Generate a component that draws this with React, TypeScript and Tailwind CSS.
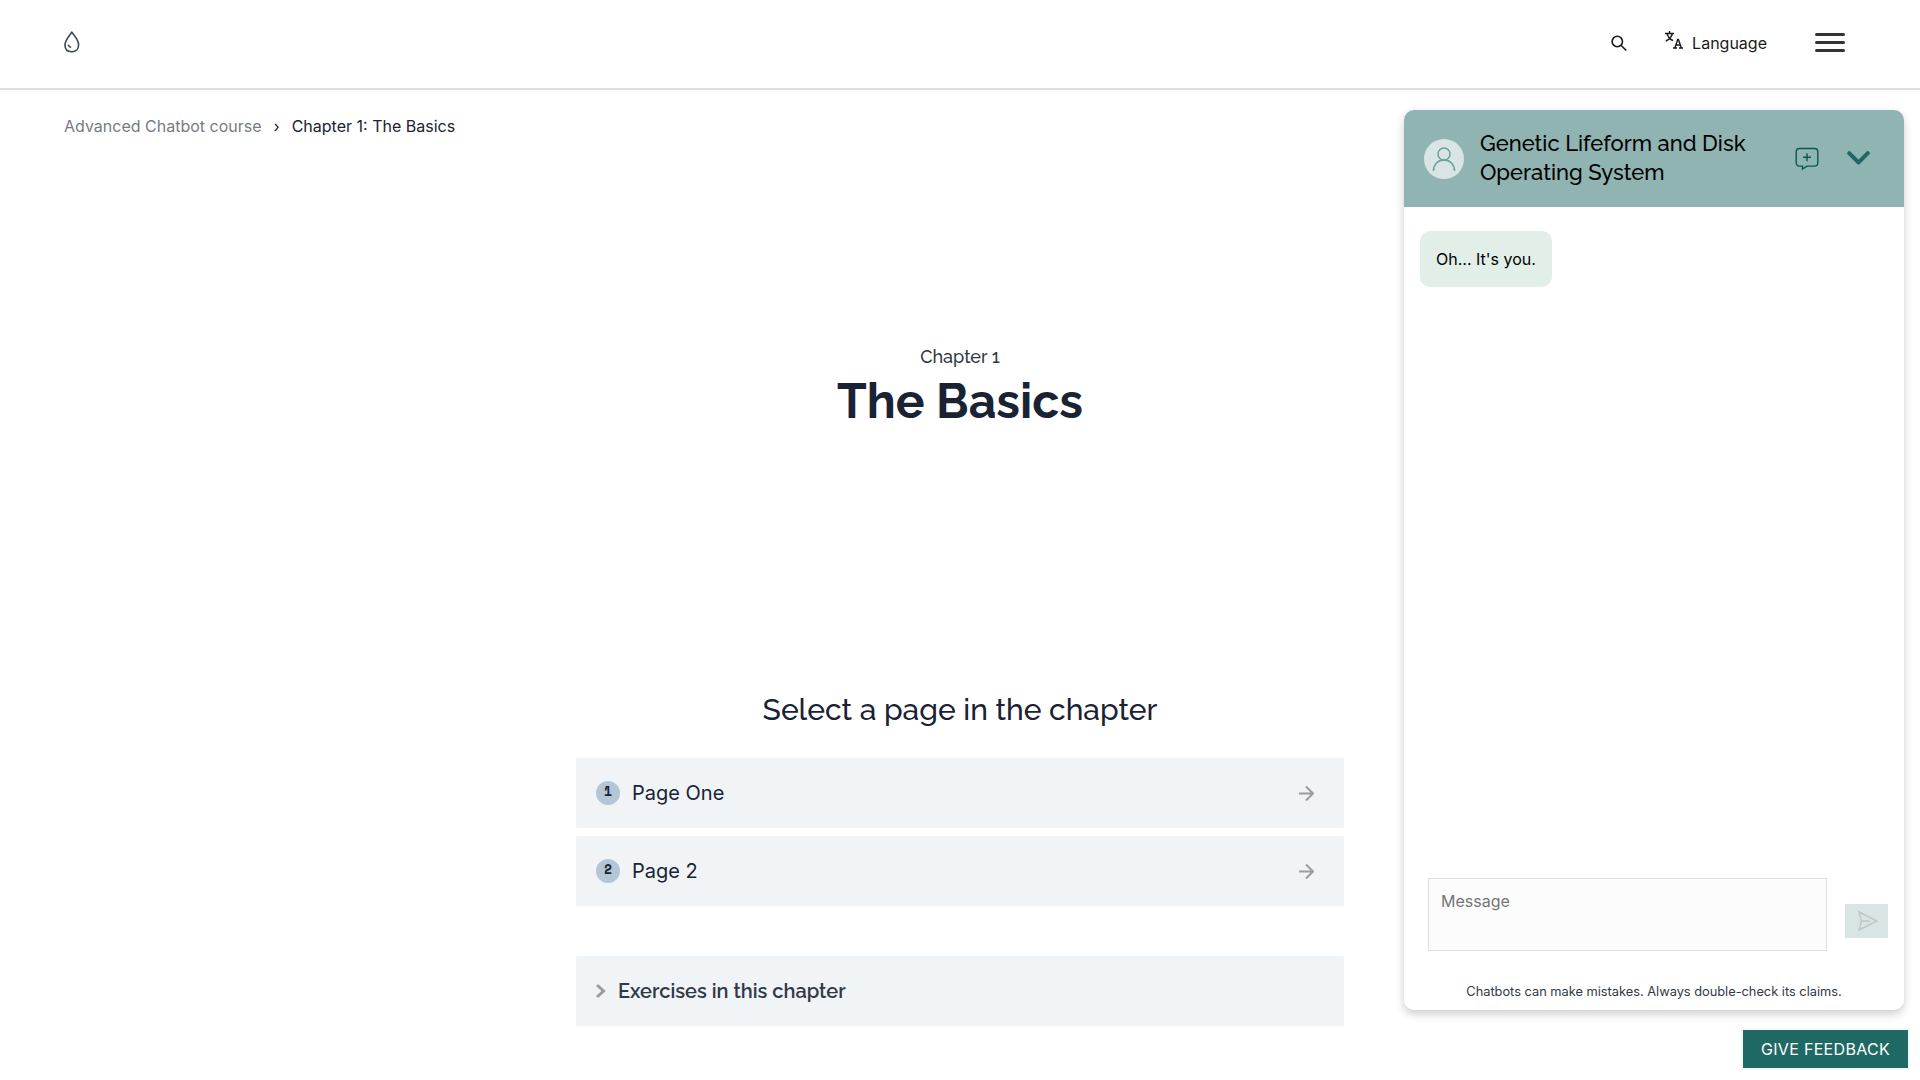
import React from "react";

function PageCard({ n, title }: { n: string; title: string }) {
  return (
    <a className="flex h-[70px] items-center rounded-[2px] bg-[#f0f4f7] pl-5 pr-[30px]">
      <span className="flex h-6 w-6 items-center justify-center rounded-full bg-[#b4c5d6] pb-1 font-['Space_Mono','Liberation_Mono',monospace] text-[13px] leading-none font-bold text-[#1a2333]">
        {n}
      </span>
      <span className="ml-3 flex-1 text-[20px] leading-6 text-[#1a2333]">{title}</span>
      <svg className="h-4 w-[15px] shrink-0" viewBox="0 0 15 16" fill="none" stroke="#989ca3" strokeWidth="2">
        <path d="M0 8.500h14M7 1.500l7 7-7 7" />
      </svg>
    </a>
  );
}

function Header() {
  return (
    <header className="flex h-[90px] items-center border-b-2 border-[#dedede] pl-16 pr-[75px]">
      <svg className="-mt-[5px] h-[22px] w-4" viewBox="0 0 16 22" fill="none" stroke="#3b4754" strokeWidth="1.600" strokeLinejoin="round">
        <path d="M7.800 1.200C6.300 3.800 1 8.300 1 14c0 4.200 2.700 6.700 6.800 6.700s6.800-2.700 6.800-6.700C14.600 8.300 9.400 3.800 7.800 1.200Z" />
        <path d="M4.200 13.800c.5 1.500 1.300 2.300 2.900 2.700" />
      </svg>
      <svg className="ml-auto -mt-0.5 h-4 w-4" viewBox="0 0 16 16" fill="none" stroke="#1a1a1a" strokeWidth="1.600">
        <circle cx="6.300" cy="6.500" r="5.200" />
        <path d="M10 10.200l5.300 5.300" />
      </svg>
      <svg className="ml-[38px] mb-2 h-[18px] w-[18px]" viewBox="0 0 18 18" fill="none" stroke="#1a1a1a" strokeWidth="1.400">
        <path d="M0 2.500h9M4.500 0v2.500M7.500 2.500C6.500 6 4 8.500.8 10M2 2.500C3 6 5 8.500 8 9.500" />
        <path d="M8 17h4M14 17h4M9.800 17l3-8.500h.6l3 8.500M11 14h4.300" />
      </svg>
      <span className="ml-[9px] -mt-0.5 text-[16px] leading-5 text-[#1a1a1a]">Language</span>
      <span className="ml-12 -mt-[3px] flex w-[30px] flex-col gap-[5px]">
        <i className="h-[3px] rounded-full bg-[#333]" />
        <i className="h-[3px] rounded-full bg-[#333]" />
        <i className="h-[3px] rounded-full bg-[#333]" />
      </span>
    </header>
  );
}

function Chat() {
  return (
    <aside className="absolute left-[1404px] top-[110px] flex h-[900px] w-[500px] flex-col overflow-hidden rounded-[10px] bg-white shadow-[0_4px_10px_rgba(0,0,0,0.2)]">
      <div className="flex h-[97px] shrink-0 items-center bg-[#90b4b2] pl-5 pr-[34px]">
        <div className="mt-px flex h-10 w-10 items-center justify-center rounded-full bg-[#d9e5e4]">
          <svg className="h-6 w-6" viewBox="0 0 24 24" fill="none" stroke="#69a19d" strokeWidth="1.500">
            <circle cx="12" cy="7" r="6" />
            <path d="M1.500 24C1.500 17.500 6 13 12 13s10.500 4.500 10.500 11" />
          </svg>
        </div>
        <h2 className="ml-4 -mt-px w-[280px] font-['Raleway','Lato',sans-serif] text-[22px] leading-[29px] font-medium text-black">
          Genetic Lifeform and Disk Operating System
        </h2>
        <svg className="ml-auto h-6 w-6" viewBox="0 0 24 24" fill="none" stroke="#065853" strokeWidth="1.400">
          <path d="M4.500 1.500h15c1.900 0 3.300 1.400 3.300 3.300v11c0 1.900-1.400 3.300-3.300 3.300h-7.500L7.500 22v-2.900h-3c-1.900 0-3.300-1.400-3.300-3.300v-11c0-1.900 1.400-3.300 3.300-3.300ZM12 6.300v8M8 10.300h8" />
        </svg>
        <svg className="ml-7 -mt-px h-4 w-[23px]" viewBox="0 0 23 16" fill="none" stroke="#1f6964" strokeWidth="4" strokeLinecap="round" strokeLinejoin="round">
          <path d="M2.200 3.200l9.300 9.300 9.300-9.300" />
        </svg>
      </div>
      <div className="flex-1 px-4 pt-6">
        <p className="w-fit rounded-[10px] bg-[#e2efe8] p-4 text-[16px] leading-6 text-black">Oh... It's you.</p>
      </div>
      <div className="flex items-center pl-6 pr-4">
        <div className="h-[73px] w-[399px] border border-[#dedede] bg-[#fcfcfc] px-3 py-[11px] text-[16px] leading-[22px] text-[#757575]">Message</div>
        <div className="ml-auto mt-[13px] flex h-[34px] w-[43px] items-center justify-center bg-[#d9e5e4]">
          <svg className="ml-[3px] h-5 w-5" viewBox="0 0 20 20" fill="none" stroke="#bcc8c6" strokeWidth="1.500">
            <path d="M1 1l18 9-18 9 2.500-9ZM3.500 10h8" />
          </svg>
        </div>
      </div>
      <p className="mt-[31px] mb-2 text-center text-[12.800px] leading-5 text-[#313947]">Chatbots can make mistakes. Always double-check its claims.</p>
    </aside>
  );
}

export default function App() {
  return (
    <div className="relative h-[1080px] w-[1920px] overflow-hidden bg-white font-['Inter',sans-serif]">
      <Header />
      <nav className="flex h-[73px] items-center pb-0.5 pl-16 text-[16px] leading-6">
        <span className="text-[#767b85]">Advanced Chatbot course</span>
        <span className="mx-3 text-[#1a2333]">›</span>
        <span className="text-[#1a2333]">Chapter 1: The Basics</span>
      </nav>
      <main className="mx-auto w-[768px]">
        <div className="flex h-[508px] flex-col items-center pt-[180px] font-['Raleway','Lato',sans-serif] text-[#1a2333]">
          <p className="text-[18px] leading-7 font-medium text-[#313947]">Chapter 1</p>
          <h1 className="mt-px text-[48px] leading-[58px] font-bold">The Basics</h1>
        </div>
        <h2 className="h-[87px] pt-[21px] text-center font-['Raleway','Lato',sans-serif] text-[30px] leading-9 font-medium text-[#1a2333]">Select a page in the chapter</h2>
        <div className="flex flex-col gap-2">
          <PageCard n="1" title="Page One" />
          <PageCard n="2" title="Page 2" />
        </div>
        <div className="mt-[50px] flex h-[70px] items-center rounded-[2px] bg-[#f0f4f7] pl-5">
          <svg className="h-4 w-[10px]" viewBox="0 0 10 16" fill="none" stroke="#989ca3" strokeWidth="3">
            <path d="M1 2l6.500 6L1 14" />
          </svg>
          <span className="ml-3 font-['Raleway','Lato',sans-serif] text-[20px] leading-6 font-semibold text-[#313947]">Exercises in this chapter</span>
        </div>
      </main>
      <Chat />
      <button className="absolute left-[1743px] top-[1030px] h-[38px] w-[165px] bg-[#1f6964] text-[16px] tracking-[0.32px] text-white shadow-[0_0_0_2px_#f4f6f8]">GIVE FEEDBACK</button>
    </div>
  );
}
